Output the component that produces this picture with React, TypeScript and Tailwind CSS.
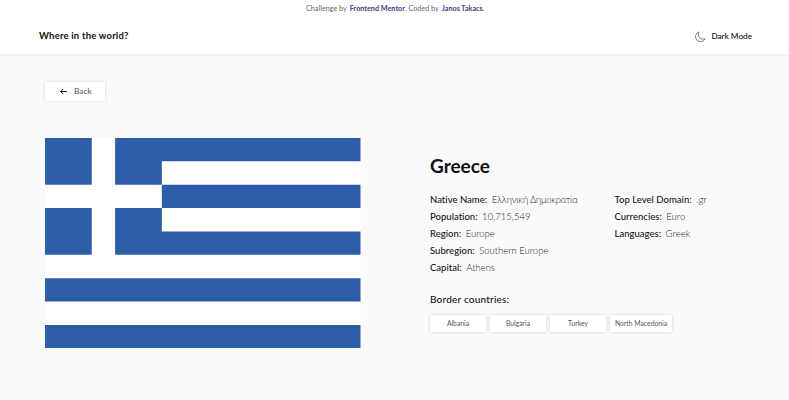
import React from "react";

type Fact = { label: string; value: string; valueClass?: string };

const mainFacts: Fact[] = [
  { label: "Native Name:", value: "Ελληνική Δημοκρατία", valueClass: "tracking-[-0.22px]" },
  { label: "Population:", value: "10,715,549", valueClass: "tracking-[0.02px]" },
  { label: "Region:", value: "Europe" },
  { label: "Subregion:", value: "Southern Europe" },
  { label: "Capital:", value: "Athens" },
];

const sideFacts: Fact[] = [
  { label: "Top Level Domain:", value: ".gr", valueClass: "tracking-[0.1px]" },
  { label: "Currencies:", value: "Euro" },
  { label: "Languages:", value: "Greek", valueClass: "tracking-[0.06px]" },
];

const borders = [
  { name: "Albania", width: "w-[56px]" },
  { name: "Bulgaria", width: "w-[56px]" },
  { name: "Turkey", width: "w-[56px]" },
  { name: "North Macedonia", width: "w-[62px]" },
];

function FactList({ facts }: { facts: Fact[] }) {
  return (
    <ul>
      {facts.map((f) => (
        <li key={f.label} className="flex h-[17px] items-center gap-[4.5px] whitespace-nowrap text-[9.5px] leading-[17px]">
          <span className="font-medium tracking-[0.02px] text-[#161616]">{f.label}</span>
          <span className={`font-light text-[#222] ${f.valueClass ?? ""}`}>{f.value}</span>
        </li>
      ))}
    </ul>
  );
}

function GreekFlag() {
  return (
    <svg viewBox="0 0 27 18" preserveAspectRatio="none" className="mt-[36.7px] h-[210.3px] w-[315.5px] shrink-0" aria-label="Flag of Greece">
      <path fill="#fff" d="M0 0h27v18H0z" />
      <path
        fill="#2d5da9"
        d="M0 0h4v4H0zM6 0h21v2H10v2H6zM10 4h17v2H10zM0 6h4v4H0zM6 6h4v2h17v2H6zM0 12h27v2H0zM0 16h27v2H0z"
      />
    </svg>
  );
}

export default function App() {
  return (
    <div className="flex h-[400px] w-[789px] flex-col overflow-hidden bg-[#fafafa] font-['Lato','Noto_Sans',sans-serif] text-[#111]">
      <div className="z-10 h-[54px] shrink-0 bg-white shadow-[0_1px_3px_rgba(0,0,0,0.08)]">
        <p className="flex h-[18px] items-center gap-[3px] whitespace-nowrap pl-[306px] text-[7.2px] tracking-[0.02px] text-[#666]">
          <span>Challenge by</span>
          <span><b className="text-[#3e3b85]">Frontend Mentor</b>. Coded by</span>
          <span><b className="text-[#3e3b85]">Janos Takacs</b>.</span>
        </p>
        <header className="flex h-[37px] items-center justify-between pl-[39px] pr-[37px]">
          <h1 className="text-[9.5px] font-bold tracking-[0.19px]">Where in the world?</h1>
          <button className="flex items-center gap-[5px] text-[8.3px] font-medium tracking-[-0.06px]">
            <svg viewBox="0 0 24 24" className="size-[11px]" fill="none" stroke="#444" strokeWidth="1.5" strokeLinejoin="round">
              <path d="M8.5 2A11 11 0 1 0 22 17.2C16 18.8 10.5 16.5 8.2 12C6.500 8.500 7 5 8.500 2Z" />
            </svg>
            Dark Mode
          </button>
        </header>
      </div>

      <main className="flex flex-1 pl-[45px]">
        <div className="flex w-[385px] shrink-0 flex-col pt-[28px]">
          <button className="flex h-[19px] w-[60px] shrink-0 items-center rounded-[1px] bg-white pl-[14px] text-[8.3px] text-[#555] shadow-[0_0_3px_rgba(0,0,0,0.17)]">
            <svg viewBox="0 0 16 16" className="mr-[6px] size-[9px]" fill="none" stroke="#111" strokeWidth="1.7">
              <path d="M14 8H3M7.500 3.500L3 8l4.500 4.500" />
            </svg>
            Back
          </button>
          <GreekFlag />
        </div>
        <section className="w-[320px] pt-[98px]">
          <h2 className="h-[28px] text-[19px] font-bold leading-[28px]">Greece</h2>
          <div className="mt-[11px] flex">
            <div className="w-[184.5px]"><FactList facts={mainFacts} /></div>
            <FactList facts={sideFacts} />
          </div>
          <h3 className="mt-[15px] h-[16px] text-[10px] font-medium leading-[16px] tracking-[0.2px]">Border countries:</h3>
          <div className="mt-[8px] flex gap-[4px]">
            {borders.map((b) => (
              <button key={b.name} className={`flex h-[17px] items-center justify-center whitespace-nowrap bg-white text-[6.8px] text-[#555] shadow-[0_0_3px_rgba(0,0,0,0.17)] ${b.width}`}>
                {b.name}
              </button>
            ))}
          </div>
        </section>
      </main>
    </div>
  );
}
